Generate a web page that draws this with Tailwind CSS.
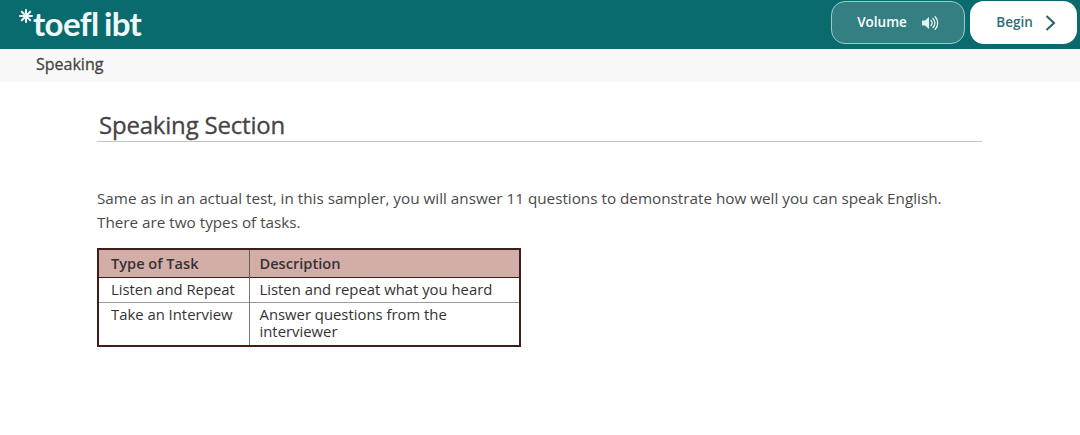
<!DOCTYPE html>
<html lang="en">
<head>
    <meta charset="UTF-8">
    <title>Speaking Section</title>
    <script src="https://cdn.jsdelivr.net/npm/@tailwindcss/browser@4"></script>
</head>

<body class="bg-white font-['Open_Sans',sans-serif] overflow-hidden">
    <header class="h-[49px] bg-[#0a6b6e] flex items-start justify-between">
        <div class="flex items-start pl-[19px] text-[#eef8f7] font-['Lato',sans-serif]">
            <svg class="mt-[9px]" width="14" height="14" viewBox="0 0 14 14" fill="none" stroke="#eef8f7" stroke-width="2" stroke-linecap="round">
                <path d="M7 1v12M1 7h12M2.800 2.800l8.400 8.400M11.200 2.800l-8.400 8.400"/>
            </svg>
            <span class="text-[33px] leading-[38px] mt-[4px] font-bold tracking-[-0.6px] [word-spacing:-2px]">toefl ibt</span>
        </div>
        <div class="flex items-start gap-[5px] pt-px pr-[3px]">
            <button class="w-[134px] h-[43px] rounded-[14px] border border-[#9cc9c8] bg-[#347f81] text-white text-[13.500px] font-semibold flex items-center justify-center gap-[14px]">
                Volume
                <svg width="18" height="16" viewBox="0 0 18 16" fill="none">
                    <path d="M1 5.500h3L8 2v12L4 10.500H1z" fill="#e6f2f1"/>
                    <path d="M10 5.500a3.500 3.500 0 0 1 0 5M12 3.500a6.300 6.300 0 0 1 0 9M14.200 1.800a9 9 0 0 1 0 12.400" stroke="#e6f2f1" stroke-width="1.300" stroke-linecap="round"/>
                </svg>
            </button>
            <button class="w-[107px] h-[43px] pl-[5px] rounded-[14px] bg-white text-[#2f6f73] text-[13.500px] font-semibold flex items-center justify-center gap-[12px]">
                Begin
                <svg width="11" height="16" viewBox="0 0 11 16" fill="none">
                    <path d="M1.500 1l7.500 7-7.500 7" stroke="#2c5f62" stroke-width="2"/>
                </svg>
            </button>
        </div>
    </header>

    <div class="h-[33px] bg-[#f8f8f8] pl-9 text-[16px] leading-[31px] [-webkit-text-stroke:0.3px_#444] text-[#444]">Speaking</div>

    <main class="pl-[97px] pr-[98px]">
        <h1 class="mt-[26px] h-[34px] border-b border-[#c4c4c4] pl-[2px] text-[24px] leading-[34px] [-webkit-text-stroke:0.3px_#444] text-[#444] tracking-[-0.2px]">Speaking Section</h1>

        <p class="mt-[44px] text-[15.250px] leading-[24px] text-[#4a4a4a]">
            Same as in an actual test, in this sampler, you will answer 11 questions to demonstrate how well you can speak English.<br>
            There are two types of tasks.
        </p>

        <table class="mt-[14px] w-[424px] table-fixed border-2 border-[#3d1f1a] border-collapse text-[14.850px] leading-[17px] text-[#333]">
            <thead>
                <tr class="h-[28px] bg-[#d3aea8] text-[14.600px]">
                    <th class="w-[151px] pl-[12px] text-left font-semibold border-r border-[#6b5a58]">Type of Task</th>
                    <th class="pl-[10px] text-left font-semibold">Description</th>
                </tr>
            </thead>
            <tbody>
                <tr class="h-[25px] border-t border-[#3d1f1a]">
                    <td class="pl-[12px] border-r border-[#777]">Listen and Repeat</td>
                    <td class="pl-[10px]">Listen and repeat what you heard</td>
                </tr>
                <tr class="border-t border-[#999]">
                    <td class="pl-[12px] pt-[3px] pb-[5px] align-top border-r border-[#777]">Take an Interview</td>
                    <td class="pl-[10px] pr-[40px] pt-[3px] pb-[5px] align-top">Answer questions from the interviewer</td>
                </tr>
            </tbody>
        </table>
    </main>
</body>

</html>
